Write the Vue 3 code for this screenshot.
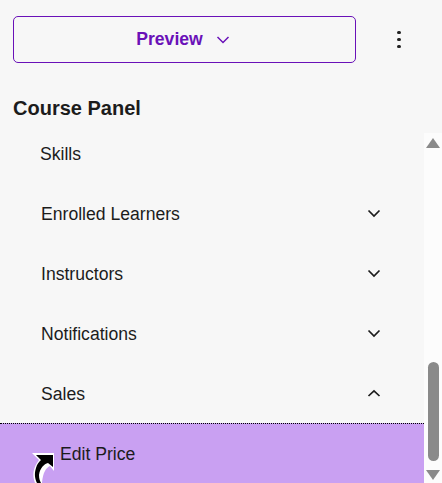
<template>
  <div class="panel">
    <div class="top-row">
      <button class="preview-btn">
        <span>Preview</span>
        <svg class="preview-chev" width="14" height="8" viewBox="0 0 14 8"><path d="M1.5 1 L7 6.5 L12.5 1" /></svg>
      </button>
      <div class="more">
        <i></i><i></i><i></i>
      </div>
    </div>
    <h2 class="title">Course Panel</h2>

    <div class="body">
      <ul class="list">
        <li v-for="item in items" :key="item.label" class="row" :class="{ first: item.first }">
          <span class="label" :class="{ skills: item.first }">{{ item.label }}</span>
          <svg v-if="item.icon" class="chev" width="14" height="9" viewBox="0 0 14 9">
            <path :d="item.icon === 'up' ? 'M1.5 7 L7 1.8 L12.5 7' : 'M1.5 1.5 L7 7 L12.5 1.5'" />
          </svg>
        </li>
        <li class="row active">
          <span class="label sub">Edit Price</span>
          <svg class="cursor" width="22" height="30" viewBox="0 0 22 30">
            <path d="M0 0 H22 V18 L18 13 C14 15 11 19 10 30 H3 C0 22 1 15 7 7 Z" fill="#fff" />
            <path d="M4 2 H21 V14 L16 10 C12 11 8 15 7 22 C7 26 8 28 9 30 H5 C3 26 2 21 4 15 C5 11 7 9 9 7 Z" fill="#000" />
          </svg>
        </li>
      </ul>
      <div class="scrollbar">
        <svg class="arrow up" width="14" height="10" viewBox="0 0 14 10"><path d="M7 0 L14 10 H0 Z" /></svg>
        <div class="thumb"></div>
        <svg class="arrow down" width="14" height="10" viewBox="0 0 14 10"><path d="M0 0 H14 L7 10 Z" /></svg>
      </div>
    </div>
  </div>
</template>

<script setup>
const items = [
  { label: 'Skills', first: true },
  { label: 'Enrolled Learners', icon: 'down' },
  { label: 'Instructors', icon: 'down' },
  { label: 'Notifications', icon: 'down' },
  { label: 'Sales', icon: 'up' }
]
</script>

<style scoped>
.panel {
  width: 442px;
  height: 483px;
  overflow: hidden;
  background: #f7f7f7;
  font-family: "Liberation Sans", Arial, sans-serif;
  color: #1c1c1c;
}

.top-row {
  display: flex;
  align-items: center;
  padding: 16px 0 0 13px;
}
.preview-btn {
  display: flex;
  align-items: center;
  justify-content: center;
  gap: 13px;
  width: 343px;
  height: 47px;
  box-sizing: border-box;
  padding: 0 3px 0 0;
  border: 1px solid #6a11b8;
  border-radius: 5px;
  background: transparent;
  color: #6a11b8;
  font-family: inherit;
  font-size: 17.6px;
  font-weight: bold;
}
.preview-chev path {
  fill: none;
  stroke: #6a11b8;
  stroke-width: 1.5;
}
.more {
  display: flex;
  flex-direction: column;
  align-items: center;
  gap: 3.5px;
  margin-left: 41px;
}
.more i {
  width: 3.5px;
  height: 3.5px;
  border-radius: 50%;
  background: #222;
}

.title {
  margin: 34px 0 13px 13px;
  font-size: 20px;
  line-height: 23px;
  font-weight: bold;
}

.body {
  display: flex;
  height: 350px;
}

.list {
  flex: 1;
  margin: 0;
  padding: 0;
  list-style: none;
  min-width: 0;
}
.row {
  position: relative;
  display: flex;
  align-items: center;
  justify-content: space-between;
  height: 60px;
  padding: 0 43px 0 41px;
  font-size: 17.6px;
}
.label { padding-top: 3px; }
.row.first {
  height: 50px;
  padding-bottom: 10px;
  box-sizing: border-box;
}
.skills { margin-left: -1px; }
.chev path {
  fill: none;
  stroke: #1c1c1c;
  stroke-width: 1.7;
}
.row.active {
  background: #c9a0f2;
  border-top: 1px dotted #000;
  box-sizing: border-box;
  padding-left: 60px;
  align-items: flex-start;
}
.sub { margin-top: 18px; line-height: 18px; }

.cursor {
  position: absolute;
  left: 32px;
  top: 29px;
}

.scrollbar {
  width: 18px;
  display: flex;
  flex-direction: column;
  align-items: center;
  background: #fcfcfc;
}
.arrow { fill: #8a8a8a; }
.arrow.up { margin-top: 5px; }
.thumb {
  width: 11px;
  height: 99px;
  margin-top: 214px;
  border-radius: 6px;
  background: #8a8a8a;
}
.arrow.down { margin-top: 9px; }
</style>

<style>
html, body { margin: 0; overflow: hidden; }
</style>
